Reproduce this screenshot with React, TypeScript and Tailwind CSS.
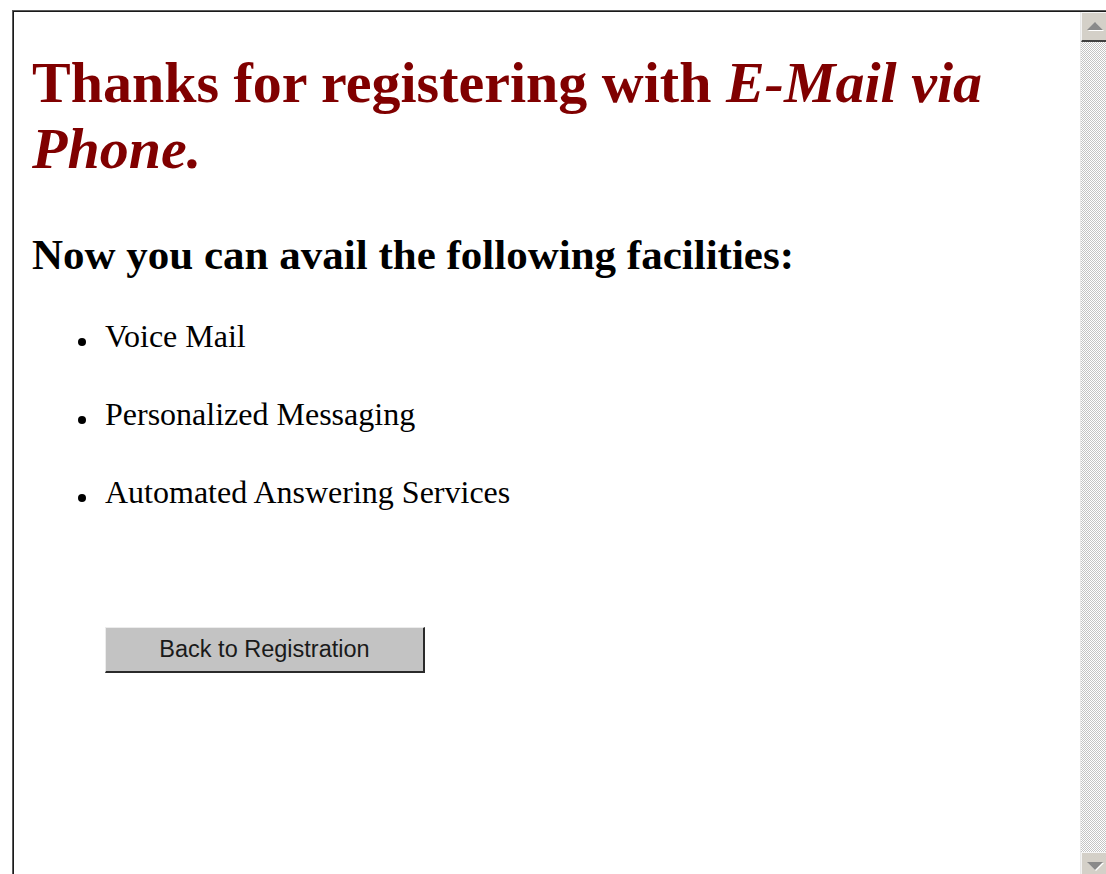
import React from 'react';

const facilities = ['Voice Mail', 'Personalized Messaging', 'Automated Answering Services'];

const ScrollArrow: React.FC<{ dir: 'up' | 'down' }> = ({ dir }) => (
    <div className="h-[30px] shrink-0 bg-[#d4d0c8] border-t border-l border-[#f4f4f4] border-b-2 border-b-[#404040] flex items-center justify-center pl-[2px]">
        <svg width="18" height="11" viewBox="0 0 18 11">
            {dir === 'up' ? (
                <>
                    <polygon points="10,2 18,10 2,10" fill="#ffffff" />
                    <polygon points="9,1 17,9 1,9" fill="#8a8a8a" />
                </>
            ) : (
                <>
                    <polygon points="2,2 18,2 10,10" fill="#ffffff" />
                    <polygon points="1,1 17,1 9,9" fill="#8a8a8a" />
                </>
            )}
        </svg>
    </div>
);

export default function App() {
    return (
        <div className="w-[1106px] h-[874px] overflow-hidden bg-white pt-[10px] pl-[12px]">
            <div className="h-[872px] border-t border-l border-[#5a5a5a]">
                <div className="h-full flex border-t border-l border-[#1a1a1a]">
                    {/* page body */}
                    <div className="flex-1 bg-white pl-[18px] pt-[38px] font-['Liberation_Serif',serif]">
                        <h1 className="text-[58px] leading-[66px] font-bold text-[#800000]">
                            Thanks for registering with <i>E-Mail via</i> <i>Phone.</i>
                        </h1>
                        <h2 className="mt-[48px] text-[43px] leading-[50px] font-bold text-black">
                            Now you can avail the following facilities:
                        </h2>
                        <ul className="mt-[38px] flex flex-col gap-[42px]">
                            {facilities.map((item) => (
                                <li key={item} className="flex items-start pl-[46px] text-[32px] leading-[36px] text-black">
                                    <span className="mt-[20px] w-2 h-2 rounded-full bg-black shrink-0" />
                                    <span className="ml-[19px]">{item}</span>
                                </li>
                            ))}
                        </ul>
                        <button
                            type="button"
                            className="mt-[117px] ml-[73px] w-[320px] h-[46px] bg-[#c3c3c3] border-t border-l border-[#ececec] border-b-2 border-r-2 border-b-[#2a2a2a] border-r-[#2a2a2a] font-['Liberation_Sans',Arial,sans-serif] text-[23.5px] text-[#1a1a1a] flex items-center justify-center"
                        >
                            Back to Registration
                        </button>
                    </div>

                    {/* vertical scrollbar */}
                    <div className="w-[26px] flex flex-col border-l border-[#e8e8e8]">
                        <ScrollArrow dir="up" />
                        <div className="flex-1 bg-[repeating-conic-gradient(#c4c4c4_0_25%,#ffffff_0_50%)] bg-size-[2px_2px]" />
                        <ScrollArrow dir="down" />
                    </div>
                </div>
            </div>
        </div>
    );
}
